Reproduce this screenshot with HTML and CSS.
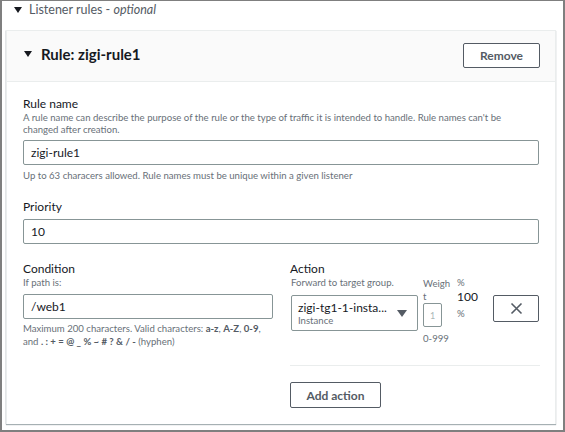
FILE: index.html
```html
<!DOCTYPE html>
<html>
<head>
<meta charset="utf-8">
<link rel="stylesheet" href="styles.css">
</head>
<body>
<div class="frame">
  <div class="section-head">
    <svg class="caret" width="8" height="6" viewBox="0 0 8 6"><polygon points="0,0 8,0 4,6" fill="#16191f"/></svg>
    <span>Listener rules - <em>optional</em></span>
  </div>
  <div class="card">
    <div class="card-head">
      <div class="title">
        <svg class="caret" width="8" height="6" viewBox="0 0 8 6"><polygon points="0,0 8,0 4,6" fill="#16191f"/></svg>
        <span>Rule: zigi-rule1</span>
      </div>
      <button class="btn remove">Remove</button>
    </div>
    <div class="card-body">
      <div class="field">
        <div class="label">Rule name</div>
        <div class="desc">A rule name can describe the purpose of the rule or the type of traffic it is intended to handle. Rule names can't be changed after creation.</div>
        <div class="input">zigi-rule1</div>
        <div class="hint">Up to 63 characers allowed. Rule names must be unique within a given listener</div>
      </div>
      <div class="field priority">
        <div class="label">Priority</div>
        <div class="input">10</div>
      </div>
      <div class="columns">
        <div class="col">
          <div class="label">Condition</div>
          <div class="desc">If path is:</div>
          <div class="input path">/web1</div>
          <div class="hint two"><span>Maximum 200 characters. Valid characters: <span class="em">a-z</span>, <span class="em">A-Z</span>, <span class="em">0-9</span>, </span><span>and <span class="em">. : + = @ _ % ~ # ? &amp; / -</span> (hyphen)</span></div>
        </div>
        <div class="col">
          <div class="label">Action</div>
          <div class="action-row">
            <div class="target">
              <div class="desc">Forward to target group.</div>
              <div class="select">
                <div class="sel-text">
                  <div class="sel-main">zigi-tg1-1-insta...</div>
                  <div class="sel-sub">Instance</div>
                </div>
                <svg class="sel-caret" width="10" height="7" viewBox="0 0 10 7"><polygon points="0,0 10,0 5,7" fill="#545b64"/></svg>
              </div>
            </div>
            <div class="weight">
              <div class="desc wlabel">Weight</div>
              <div class="winput">1</div>
              <div class="desc range">0-999</div>
            </div>
            <div class="percent">
              <div class="desc">%</div>
              <div class="pval">100</div>
              <div class="desc">%</div>
            </div>
            <button class="btn xbtn" aria-label="Remove action">
              <svg width="13" height="13" viewBox="0 0 13 13"><path d="M1.5 1.5 L11.5 11.5 M11.5 1.5 L1.5 11.5" stroke="#545b64" stroke-width="1.6" fill="none"/></svg>
            </button>
          </div>
          <div class="divider"></div>
          <button class="btn add">Add action</button>
        </div>
      </div>
    </div>
  </div>
</div>
</body>
</html>
```

FILE: styles.css
```css
* { box-sizing: border-box; }
body {
  margin: 0;
  font-family: Lato, "Noto Sans", sans-serif;
  color: #16191f;
  background: #fff;
}
.frame {
  width: 565px;
  height: 432px;
  border: 2px solid #7f7f7f;
  border-top-width: 1px;
  padding: 0 7px 0 4px;
}
.section-head {
  height: 29px;
  display: flex;
  align-items: center;
  padding: 0 0 12px 8px;
  font-size: 12.5px;
  color: #545b64;
}
.section-head .caret { margin-right: 7px; }
.section-head em { font-style: italic; }
.card {
  height: 394px;
  border: 1px solid #eaeded;
  border-bottom: none;
  box-shadow: 0 1px 1px 0 rgba(0, 28, 36, 0.35), -1px 0 0 0 rgba(0, 28, 36, 0.05);
}
.card-head {
  height: 51px;
  background: #fafafa;
  border-bottom: 1px solid #eaeded;
  display: flex;
  align-items: center;
  justify-content: space-between;
  padding: 0 15px 0 17px;
}
.title {
  display: flex;
  align-items: center;
  font-size: 15px;
  font-weight: 700;
  color: #16191f;
  padding-bottom: 5px;
}
.title .caret { margin-right: 9px; }
.btn {
  font-family: inherit;
  background: #fff;
  border: 1px solid #545b64;
  border-radius: 2px;
  color: #545b64;
  font-weight: 700;
  font-size: 12px;
  padding: 0;
  display: flex;
  align-items: center;
  justify-content: center;
}
.remove { width: 77px; height: 25px; margin-bottom: 2px; }
.card-body {
  padding: 14px 16px 0 16px;
}
.label {
  font-size: 12px;
  line-height: 16px;
  color: #16191f;
}
.desc {
  font-size: 9.6px;
  line-height: 12px;
  color: #687078;
}
.hint {
  font-size: 9.6px;
  line-height: 13px;
  color: #687078;
  margin-top: 4px;
}
.hint.two {
  margin-top: 3px;
  padding-right: 2px;
}
.hint .em { color: #545b64; font-weight: 700; }
.input {
  height: 25px;
  border: 1px solid #879596;
  border-radius: 2px;
  font-size: 12px;
  display: flex;
  align-items: center;
  padding-left: 7px;
  color: #16191f;
}
.field .desc + .input { margin-top: 4px; }
.priority { margin-top: 17px; }
.priority .input { margin-top: 4px; }
.columns {
  margin-top: 17px;
  display: grid;
  grid-template-columns: 250px 250px;
  column-gap: 17px;
}
.input.path { margin-top: 5px; }
.action-row {
  display: flex;
}
.target { width: 128px; padding-left: 1px; }
.select {
  margin-top: 6px;
  width: 127px;
  height: 36px;
  border: 1px solid #879596;
  border-radius: 2px;
  display: flex;
  align-items: center;
  padding: 0 10px 0 6px;
  justify-content: space-between;
}
.sel-main { font-size: 12px; line-height: 15px; color: #16191f; }
.sel-sub { font-size: 9.6px; line-height: 12px; color: #687078; }
.sel-caret { margin-top: 1px; }
.weight {
  width: 30px;
  margin-left: 5px;
}
.wlabel {
  width: 28px;
  word-break: break-all;
  line-height: 13px;
}
.winput {
  width: 19px;
  height: 24px;
  border: 1px solid #879596;
  border-radius: 2px;
  font-size: 9px;
  color: #aab7b8;
  display: flex;
  align-items: center;
  justify-content: center;
}
.range { margin-top: 6px; }
.percent {
  margin-left: 4px;
  width: 36px;
}
.pval {
  font-size: 12px;
  line-height: 14px;
  margin-top: 1px;
  color: #16191f;
}
.percent .pval + .desc { margin-top: 4px; }
.xbtn {
  width: 46px;
  height: 27px;
  margin-top: 18px;
}
.divider {
  margin-top: 20px;
  height: 1px;
  background: #eaeded;
}
.add {
  margin-top: 16px;
  width: 91px;
  height: 26px;
}
```
